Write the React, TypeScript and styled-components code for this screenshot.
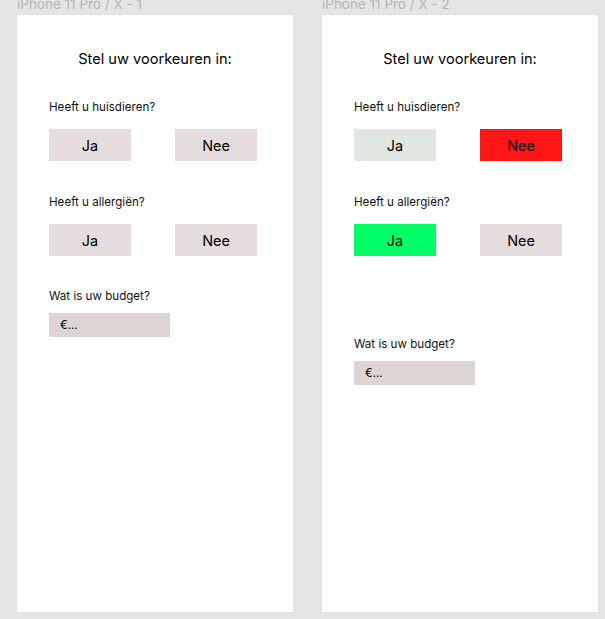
import React from 'react';
import styled, { createGlobalStyle } from 'styled-components';

type Choice = 'none' | 'ja' | 'nee';

const FRAMES: { label: string; pets: Choice; allergies: Choice; budgetGap: number }[] = [
	{ label: 'iPhone 11 Pro / X - 1', pets: 'none', allergies: 'none', budgetGap: 33 },
	{ label: 'iPhone 11 Pro / X - 2', pets: 'nee', allergies: 'ja', budgetGap: 81 },
];

const TONES = {
	idle: '#e5dddd',
	muted: '#dee6df',
	yes: '#00ff66',
	no: '#ff1616',
};

function toneFor(choice: Choice, option: 'ja' | 'nee') {
	if (choice === 'none') return TONES.idle;
	if (choice === option) return option === 'ja' ? TONES.yes : TONES.no;
	// the other option of an answered pair
	return option === 'ja' ? TONES.muted : TONES.idle;
}

export default function App() {
	return (
		<>
			<GlobalStyle />
			<Canvas>
				{FRAMES.map((frame) => (
					<FrameColumn key={frame.label}>
						<FrameLabel>{frame.label}</FrameLabel>
						<Phone>
							<Title>Stel uw voorkeuren in:</Title>
							<Question $gap={31}>Heeft u huisdieren?</Question>
							<ButtonRow>
								<ChoiceButton $tone={toneFor(frame.pets, 'ja')}>Ja</ChoiceButton>
								<ChoiceButton $tone={toneFor(frame.pets, 'nee')}>Nee</ChoiceButton>
							</ButtonRow>
							<Question $gap={34}>Heeft u allergiën?</Question>
							<ButtonRow>
								<ChoiceButton $tone={toneFor(frame.allergies, 'ja')}>Ja</ChoiceButton>
								<ChoiceButton $tone={toneFor(frame.allergies, 'nee')}>Nee</ChoiceButton>
							</ButtonRow>
							<Question $gap={frame.budgetGap}>Wat is uw budget?</Question>
							<BudgetField>€...</BudgetField>
						</Phone>
					</FrameColumn>
				))}
			</Canvas>
		</>
	);
}

const GlobalStyle = createGlobalStyle`
	html, body {
		margin: 0;
		background: #e5e5e5;
	}
	body {
		font-family: Inter, 'Liberation Sans', sans-serif;
		overflow: hidden;
	}
`;

const Canvas = styled.main`
	display: flex;
	gap: 29px;
	padding-left: 17px;
	height: 619px;
	overflow: hidden;
`;

const FrameColumn = styled.section`
	display: flex;
	flex-direction: column;
`;

const FrameLabel = styled.div`
	margin-top: -6px;
	height: 21px;
	line-height: 21px;
	font-size: 13.5px;
	color: #b5b5b5;
	white-space: nowrap;
`;

const Phone = styled.div`
	display: flex;
	flex-direction: column;
	width: 276px;
	height: 597px;
	box-sizing: border-box;
	padding: 34px 36px 0 32px;
	background: #fff;
	box-shadow: 0 0 0 0.5px #dcdcdc;
`;

const Title = styled.h1`
	margin: 0 -36px 0 -32px;
	height: 20px;
	line-height: 20px;
	font-size: 14.6px;
	font-weight: 400;
	text-align: center;
	color: #000;
`;

const Question = styled.p<{ $gap: number }>`
	margin: ${({ $gap }) => $gap}px 0 0;
	height: 14px;
	line-height: 14px;
	font-size: 11.6px;
	color: #111;
`;

const ButtonRow = styled.div`
	display: flex;
	gap: 44px;
	margin-top: 15px;
`;

const ChoiceButton = styled.button<{ $tone: string }>`
	width: 82px;
	height: 32px;
	padding: 0;
	border: none;
	background: ${({ $tone }) => $tone};
	font-family: inherit;
	font-size: 14.4px;
	color: #000;
`;

const BudgetField = styled.div`
	margin-top: 10px;
	width: 121px;
	height: 24px;
	box-sizing: border-box;
	padding-left: 11px;
	line-height: 24px;
	font-size: 11.5px;
	color: #000;
	background: #ddd5d3;
`;
